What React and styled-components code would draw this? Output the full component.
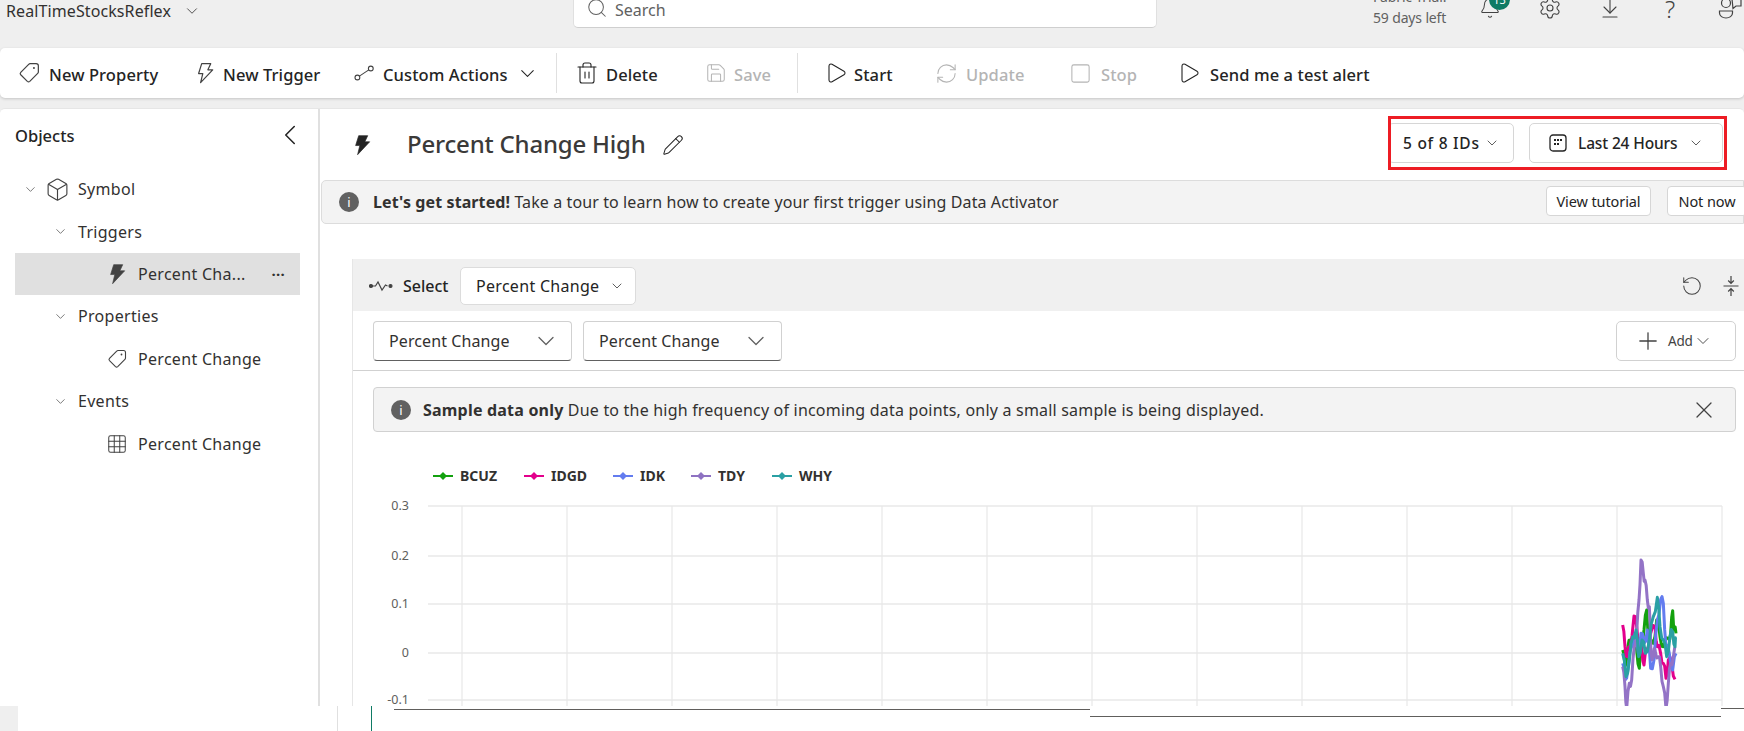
import React from 'react';
import styled, { createGlobalStyle } from 'styled-components';
import {
  Search, Settings, ArrowDownToLine, Bell, ChevronDown, ChevronLeft, Trash2, Save, Play, RefreshCw, Square, Pencil, Plus, X, RotateCcw, Box, Grid3x3,
} from 'lucide-react';

const GlobalStyle = createGlobalStyle`
  html, body { margin: 0; padding: 0; background: #fff; }
  body { font-family: "Noto Sans", "Open Sans", Arial, sans-serif; color: #242424; }
  * { box-sizing: border-box; }
`;

const Page = styled.div`
  width: 1744px;
  height: 731px;
  overflow: hidden;
  background: #efefef;
  display: flex;
  flex-direction: column;
`;

const TopBar = styled.header`
  height: 48px;
  flex: none;
  display: flex;
  align-items: flex-end;
  padding-bottom: 20px;
  overflow: hidden;
`;

const AppName = styled.div`
  width: 573px;
  flex: none;
  padding-left: 6px;
  margin-bottom: 7px;
  display: flex;
  align-items: center;
  gap: 12px;
  font-size: 16px;
  line-height: 20px;
  letter-spacing: 0.1px;
  color: #323130;
`;

const SearchBox = styled.div`
  width: 584px;
  height: 40px;
  flex: none;
  display: flex;
  align-items: center;
  gap: 7px;
  padding-left: 12px;
  background: #fff;
  border: 1px solid #e0e0e0;
  border-bottom-color: #cfcfcf;
  border-radius: 5px;
  font-size: 16px;
  color: #616161;
`;

const SearchText = styled.span`
  padding-top: 4px;
`;

const Trial = styled.div`
  width: 72px;
  flex: none;
  margin: 0 15px 0 216px;
  font-size: 14px;
  line-height: 21px;
  letter-spacing: -0.15px;
  white-space: nowrap;
  color: #616161;
`;

const HeadSlot = styled.div`
  position: relative;
  width: 60px;
  height: 40px;
  flex: none;
  display: flex;
  align-items: center;
  justify-content: center;
  color: #424242;
`;

const Badge = styled.span`
  position: absolute;
  top: 1px;
  left: 29px;
  width: 21px;
  height: 21px;
  border-radius: 50%;
  background: #0f7b65;
  color: #fff;
  font-size: 11px;
  line-height: 21px;
  text-align: center;
`;

const QuestionMark = styled.span`
  font-size: 24px;
  font-weight: 300;
  color: #424242;
`;

const Toolbar = styled.nav`
  height: 50px;
  flex: none;
  display: flex;
  align-items: center;
  padding-left: 18px;
  background: #fff;
  border-radius: 5px;
  box-shadow: 0 1px 3px rgba(0, 0, 0, 0.18);
  margin-bottom: 10px;
`;

const ToolItem = styled.div`
  width: ${p => p.$w}px;
  flex: none;
  display: flex;
  align-items: center;
  gap: ${p => p.$gap || 9}px;
  font-size: 16.5px;
  font-weight: 500;
  letter-spacing: 0.1px;
  white-space: nowrap;
  color: ${p => (p.$off ? '#b4b4b4' : '#242424')};
`;

const ToolLabel = styled.span`
  padding-top: 2px;
`;

const ToolDivider = styled.span`
  width: 1px;
  height: 40px;
  flex: none;
  margin-right: ${p => p.$after}px;
  background: #e0e0e0;
`;

const Workspace = styled.div`
  height: 598px;
  flex: none;
  display: flex;
  background: #fff;
  border-top: 1px solid #e6e6e6;
  border-radius: 5px 5px 0 0;
`;

const Sidebar = styled.aside`
  width: 320px;
  flex: none;
  border-right: 2px solid #e0e0e0;
  padding-top: 13px;
`;

const SideHead = styled.div`
  height: 26px;
  margin-bottom: 20px;
  padding: 0 11px 0 15px;
  display: flex;
  align-items: center;
  justify-content: space-between;
  font-size: 16.5px;
  font-weight: 500;
`;

const TreeRow = styled.div`
  height: 42.4px;
  display: flex;
  align-items: center;
  padding-left: ${p => p.$indent}px;
  margin: 0 18px 0 15px;
  background: ${p => (p.$active ? '#e0e0e0' : 'transparent')};
  font-size: 16px;
  letter-spacing: 0.3px;
  white-space: nowrap;
  color: #323130;
`;

const TreeIcon = styled.span`
  width: ${p => p.$w}px;
  flex: none;
  display: flex;
  align-items: center;
  color: #424242;
`;

const Ellipsis = styled.span`
  margin-left: auto;
  margin-right: 15px;
  font-weight: 700;
  font-size: 15px;
`;

const Content = styled.main`
  position: relative;
  flex: 1;
  min-width: 0;
`;

const TitleRow = styled.div`
  height: 71px;
  display: flex;
  align-items: center;
  padding-left: 31px;
`;

const Title = styled.h1`
  margin: 0 16px 2px 34px;
  font-size: 24px;
  font-weight: 500;
  line-height: 30px;
  letter-spacing: -0.2px;
  color: #3b3a39;
`;

const FilterGroup = styled.div`
  margin: 0 21px 3px auto;
  display: flex;
  gap: 15px;
`;

const FilterButton = styled.button`
  width: ${p => p.$w}px;
  height: 40px;
  display: flex;
  align-items: center;
  gap: ${p => p.$gap}px;
  padding: 0 0 0 ${p => p.$pad}px;
  background: #fff;
  border: 1px solid #d6d6d6;
  border-radius: 5px;
  font: 500 15.5px "Noto Sans", sans-serif;
  letter-spacing: ${p => p.$track}px;
  white-space: nowrap;
  color: #242424;
`;

const RedFrame = styled.div`
  position: absolute;
  top: 7px;
  right: 17px;
  width: 339px;
  height: 54px;
  border: 3px solid #ed1c24;
  pointer-events: none;
`;

const Banner = styled.div`
  height: 44px;
  margin-left: 1px;
  display: flex;
  align-items: center;
  padding-left: 17px;
  gap: 14px;
  background: #f3f3f3;
  border: 1px solid #dcdcdc;
  border-radius: 5px 0 0 5px;
  font-size: 16px;
  letter-spacing: 0.1px;
  white-space: nowrap;
  color: #323130;
`;

const InfoDot = styled.span`
  width: 20px;
  height: 20px;
  flex: none;
  border-radius: 50%;
  background: #616161;
  color: #fff;
  font-size: 13px;
  line-height: 20px;
  letter-spacing: 0;
  text-align: center;
`;

const BannerActions = styled.div`
  margin: 0 -4px 2px auto;
  display: flex;
  gap: 16px;
`;

const SmallButton = styled.button`
  width: ${p => p.$w}px;
  height: 30px;
  padding: 0;
  background: #fff;
  border: 1px solid #d6d6d6;
  border-radius: 4px;
  font: 14.5px "Noto Sans", sans-serif;
  letter-spacing: -0.1px;
  color: #242424;
`;

const Card = styled.section`
  margin: 35px 0 0 32px;
  border-left: 1px solid #e6e6e6;
`;

const CardHead = styled.div`
  height: 52px;
  display: flex;
  align-items: center;
  padding: 2px 0 0 16px;
  background: #f0f0f0;
  font-size: 16px;
  font-weight: 500;
`;

const SelectLabel = styled.span`
  width: 57px;
  margin-left: 10px;
`;

const MeasureButton = styled.div`
  width: 176px;
  height: 38px;
  display: flex;
  align-items: center;
  justify-content: space-between;
  padding: 0 10px 0 15px;
  background: #fff;
  border: 1px solid #dcdcdc;
  border-radius: 5px;
  font-weight: 400;
  letter-spacing: 0.3px;
  white-space: nowrap;
`;

const HeadTools = styled.div`
  margin-left: auto;
  margin-right: 5px;
  display: flex;
  align-items: center;
  gap: 20px;
  color: #424242;
`;

const FieldRow = styled.div`
  height: 60px;
  display: flex;
  align-items: center;
  gap: 11px;
  padding: 0 8px 0 20px;
  border-bottom: 1px solid #d1d1d1;
`;

const FieldSelect = styled.div`
  width: 199px;
  height: 40px;
  display: flex;
  align-items: center;
  justify-content: space-between;
  padding: 0 11px 0 15px;
  background: #fff;
  border: 1px solid #d1d1d1;
  border-bottom-color: #616161;
  border-radius: 4px;
  font-size: 16px;
  letter-spacing: 0.1px;
  white-space: nowrap;
  color: #323130;

  svg {
    color: #616161;
  }
`;

const AddButton = styled.div`
  width: 120px;
  height: 40px;
  margin-left: auto;
  display: flex;
  align-items: center;
  padding-left: 17px;
  background: #fff;
  border: 1px solid #d1d1d1;
  border-radius: 5px;
  font-size: 13.5px;
  color: #424242;
`;

const AddText = styled.span`
  margin: 0 0 0 6px;
  letter-spacing: -0.2px;
`;

const SampleNotice = styled.div`
  height: 45px;
  margin: 16px 8px 0 20px;
  display: flex;
  align-items: center;
  gap: 12px;
  padding: 0 17px 0 17px;
  background: #f3f3f3;
  border: 1px solid #d1d1d1;
  border-radius: 4px;
  font-size: 16px;
  letter-spacing: 0.2px;
  white-space: nowrap;
  color: #323130;
`;

const NoticeClose = styled.span`
  margin-left: auto;
  display: flex;
  color: #424242;
`;

const Legend = styled.div`
  height: 58px;
  padding: 29px 0 0 80px;
  display: flex;
  align-items: center;
`;

const LegendItem = styled.div`
  width: ${p => p.$w}px;
  flex: none;
  display: flex;
  align-items: center;
  gap: 7px;
  font-size: 14px;
  font-weight: 700;
  color: #323130;
`;

const ChartSvg = styled.svg`
  display: block;
  width: 1391px;
  height: 216px;
`;

const AxisText = styled.text`
  font: 12.5px "Noto Sans", sans-serif;
  fill: #605e5c;
`;

const BottomStrip = styled.div`
  flex: 1;
  display: flex;
  background: #fff;
`;

const Gutter = styled.div`
  width: 18px;
  flex: none;
  background: #efefef;
`;

const StripCell = styled.div`
  width: ${p => p.$w}px;
  flex: none;
  border-right: 1px solid ${p => p.$line || 'transparent'};
`;

const AxisPiece = styled.div`
  width: ${p => p.$w}px;
  height: 1px;
  flex: none;
  margin-top: ${p => p.$top}px;
  background: #605e5c;
`;

const thin = { strokeWidth: 1.1 };

const Flash = ({ size = 20, outline, color = '#424242' }) => (
  <svg width={size} height={size} viewBox="0 0 20 20">
    <path
      d="M7 1.5h8.2l-2.6 5.6H17L6 18.8l2-8.3H4.2z"
      fill={outline ? 'none' : color}
      stroke={color}
      strokeWidth={outline ? 1.1 : 0.6}
      strokeLinejoin="round"
    />
  </svg>
);

const TagIcon = ({ size = 22 }) => (
  <svg width={size} height={size} viewBox="0 0 20 20" fill="none" stroke="#424242" strokeWidth="1.1">
    <path d="M11 1.5h5.5A2 2 0 0 1 18.5 3.5V9c0 .5-.2 1-.6 1.4l-7.2 7.2a1.6 1.6 0 0 1-2.2 0l-6-6a1.6 1.6 0 0 1 0-2.2l7.2-7.3c.4-.4.8-.6 1.3-.6z" />
    <circle cx="14.5" cy="5.5" r="0.9" fill="#424242" stroke="none" />
  </svg>
);

const LinkIcon = () => (
  <svg width="21" height="20" viewBox="0 0 21 20" fill="none" stroke="#424242" strokeWidth="1.1">
    <circle cx="3.4" cy="14.5" r="2.4" />
    <circle cx="16.8" cy="5.5" r="2.4" />
    <path d="M5.4 13.1 14.8 6.9" />
  </svg>
);

const WaveIcon = () => (
  <svg width="24" height="14" viewBox="0 0 24 14" fill="none" stroke="#424242" strokeWidth="1.2">
    <circle cx="2" cy="7" r="1.5" fill="#424242" />
    <path d="M3 7h3.5L9 3l4 8 3.5-5 2 1" />
    <circle cx="21.5" cy="7" r="1.5" fill="#424242" />
  </svg>
);

const CollapseIcon = () => (
  <svg width="16" height="22" viewBox="0 0 16 22" fill="none" stroke="#424242" strokeWidth="1.2">
    <path d="M8 1v7M5.2 5.5 8 8.4l2.8-2.9M0.5 11h15M8 21v-7M5.2 16.5 8 13.6l2.8 2.9" />
  </svg>
);

const CalendarIcon = () => (
  <svg width="18" height="18" viewBox="0 0 18 18" fill="#242424">
    <rect x="1" y="1" width="16" height="16" rx="3" fill="none" stroke="#242424" strokeWidth="1.3" />
    <rect x="5" y="5" width="2" height="2" />
    <rect x="8" y="5" width="2" height="2" />
    <rect x="11" y="5" width="2" height="2" />
    <rect x="5" y="9" width="2" height="2" />
    <rect x="8" y="9" width="2" height="2" />
  </svg>
);

const PersonIcon = () => (
  <svg width="26" height="24" viewBox="0 0 26 24" fill="none" stroke="#424242" strokeWidth="1.2">
    <circle cx="9" cy="7" r="4.5" />
    <path d="M2.5 15h13v2c0 3-3 5-6.5 5s-6.5-2-6.5-5z" />
    <path d="M15 3h9v7h-5l-3 2.5z" />
  </svg>
);

const Marker = ({ color }) => (
  <svg width="20" height="10" viewBox="0 0 20 10">
    <path d="M0 5h20" stroke={color} strokeWidth="2" />
    <path d="M10 1l4 4-4 4-4-4z" fill={color} />
  </svg>
);

const legend = [
  { name: 'BCUZ', color: '#13a10e', w: 91 },
  { name: 'IDGD', color: '#e3008c', w: 89 },
  { name: 'IDK', color: '#637cef', w: 78 },
  { name: 'TDY', color: '#8e72c2', w: 81 },
  { name: 'WHY', color: '#2aa0a4', w: 80 },
];

const yTicks = [
  { label: '0.3', y: 506 },
  { label: '0.2', y: 556 },
  { label: '0.1', y: 604 },
  { label: '0', y: 653 },
  { label: '-0.1', y: 700 },
];

const xTicks = Array.from({ length: 13 }, (_, i) => 462 + i * 105);

// points read off the reference, in crop pixels (3x from x=1540, y=520)
const series = [
  { color: '#13a10e', pts: [[248,390],[255,440],[262,390],[272,360],[280,340],[290,390],[298,445],[305,360],[312,330],[320,270],[328,380],[340,370],[350,300],[360,350],[370,380],[385,355],[392,340],[398,272],[403,330],[408,340]] },
  { color: '#e3008c', pts: [[248,315],[255,380],[262,410],[270,380],[282,288],[290,320],[297,360],[305,380],[312,435],[320,390],[332,340],[345,320],[352,380],[362,400],[370,430],[378,475],[385,420],[395,430],[405,478]] },
  { color: '#637cef', pts: [[248,430],[255,480],[265,440],[275,380],[285,340],[295,400],[303,340],[312,370],[322,330],[332,445],[342,420],[352,300],[362,238],[370,250],[378,380],[388,400],[398,450],[408,400]] },
  { color: '#9373c6', pts: [[248,440],[255,500],[260,565],[268,490],[275,480],[283,380],[290,340],[297,240],[303,120],[310,160],[315,180],[322,240],[328,260],[333,400],[340,410],[345,390],[355,410],[362,440],[370,500],[378,565],[385,490],[392,430],[400,410],[408,385]] },
  { color: '#2aa0a4', pts: [[248,400],[258,470],[268,420],[278,350],[288,330],[296,410],[306,360],[316,400],[328,360],[340,290],[352,232],[360,320],[370,360],[380,410],[390,350],[398,335],[405,380],[408,355]] },
];

// add a midpoint with a little wobble so the lines look like sampled data
const roughen = pts =>
  pts.flatMap(([x, y], i) => {
    if (i === pts.length - 1) return [[x, y]];
    const [nx, ny] = pts[i + 1];
    return [[x, y], [(x + nx) / 2, (y + ny) / 2 + (i % 2 ? 14 : -14)]];
  });

const toPage = pts => pts.map(([x, y]) => `${1540 + x / 3},${520 + y / 3}`).join(' ');

const Chart = () => (
  <ChartSvg viewBox="353 490 1391 216">
    {yTicks.map(t => (
      <g key={t.label}>
        <path d={`M428 ${t.y}H1722`} stroke="#e8e8e8" strokeWidth="1.5" />
        <AxisText x="409" y={t.y + 4} textAnchor="end">{t.label}</AxisText>
      </g>
    ))}
    {xTicks.map(x => (
      <path key={x} d={`M${x} 506V706`} stroke="#e8e8e8" strokeWidth="1.2" />
    ))}
    {series.map(s => (
      <polyline key={s.color} points={toPage(roughen(s.pts))} fill="none" stroke={s.color} strokeWidth="3" strokeLinejoin="round" />
    ))}
  </ChartSvg>
);

const App = () => (
  <Page>
    <GlobalStyle />
    <TopBar>
      <AppName>
        RealTimeStocksReflex
        <ChevronDown size={18} {...thin} />
      </AppName>
      <SearchBox>
        <Search size={22} {...thin} />
        <SearchText>Search</SearchText>
      </SearchBox>
      <Trial>
        Fabric Trial:
        <br />
        59 days left
      </Trial>
      <HeadSlot>
        <Bell size={22} {...thin} />
        <Badge>13</Badge>
      </HeadSlot>
      <HeadSlot><Settings size={24} {...thin} /></HeadSlot>
      <HeadSlot><ArrowDownToLine size={24} {...thin} /></HeadSlot>
      <HeadSlot><QuestionMark>?</QuestionMark></HeadSlot>
      <HeadSlot><PersonIcon /></HeadSlot>
    </TopBar>

    <Toolbar>
      <ToolItem $w={176}><TagIcon /><ToolLabel>New Property</ToolLabel></ToolItem>
      <ToolItem $w={160} $gap={7}><Flash outline size={22} /><ToolLabel>New Trigger</ToolLabel></ToolItem>
      <ToolItem $w={202} $gap={8}><LinkIcon /><ToolLabel>Custom Actions</ToolLabel><ChevronDown size={23} {...thin} /></ToolItem>
      <ToolDivider $after={18} />
      <ToolItem $w={130} $gap={7}><Trash2 size={24} {...thin} /><ToolLabel>Delete</ToolLabel></ToolItem>
      <ToolItem $w={92} $gap={7} $off><Save size={22} {...thin} /><ToolLabel>Save</ToolLabel></ToolItem>
      <ToolDivider $after={26} />
      <ToolItem $w={111} $gap={6}><Play size={24} {...thin} /><ToolLabel>Start</ToolLabel></ToolItem>
      <ToolItem $w={134} $gap={8} $off><RefreshCw size={23} {...thin} /><ToolLabel>Update</ToolLabel></ToolItem>
      <ToolItem $w={108} $gap={9} $off><Square size={23} {...thin} /><ToolLabel>Stop</ToolLabel></ToolItem>
      <ToolItem $w={200} $gap={9}><Play size={24} {...thin} /><ToolLabel>Send me a test alert</ToolLabel></ToolItem>
    </Toolbar>

    <Workspace>
      <Sidebar>
        <SideHead>
          Objects
          <ChevronLeft size={34} {...thin} />
        </SideHead>
        <TreeRow $indent={8}>
          <TreeIcon $w={22}><ChevronDown size={15} {...thin} /></TreeIcon>
          <TreeIcon $w={33}><Box size={25} {...thin} /></TreeIcon>
          Symbol
        </TreeRow>
        <TreeRow $indent={38}>
          <TreeIcon $w={25}><ChevronDown size={15} {...thin} /></TreeIcon>
          Triggers
        </TreeRow>
        <TreeRow $indent={91} $active>
          <TreeIcon $w={32}><Flash size={22} /></TreeIcon>
          Percent Cha...
          <Ellipsis>···</Ellipsis>
        </TreeRow>
        <TreeRow $indent={38}>
          <TreeIcon $w={25}><ChevronDown size={15} {...thin} /></TreeIcon>
          Properties
        </TreeRow>
        <TreeRow $indent={92}>
          <TreeIcon $w={31}><TagIcon size={20} /></TreeIcon>
          Percent Change
        </TreeRow>
        <TreeRow $indent={38}>
          <TreeIcon $w={25}><ChevronDown size={15} {...thin} /></TreeIcon>
          Events
        </TreeRow>
        <TreeRow $indent={91}>
          <TreeIcon $w={32}><Grid3x3 size={22} {...thin} /></TreeIcon>
          Percent Change
        </TreeRow>
      </Sidebar>

      <Content>
        <TitleRow>
          <Flash size={22} color="#242424" />
          <Title>Percent Change High</Title>
          <Pencil size={22} {...thin} />
          <FilterGroup>
            <FilterButton $w={126} $pad={14} $gap={4} $track={0.75}>
              5 of 8 IDs
              <ChevronDown size={16} {...thin} />
            </FilterButton>
            <FilterButton $w={194} $pad={19} $gap={11} $track={-0.15}>
              <CalendarIcon />
              Last 24 Hours
              <ChevronDown size={16} {...thin} />
            </FilterButton>
          </FilterGroup>
        </TitleRow>
        <RedFrame />
        <Banner>
          <InfoDot>i</InfoDot>
          <span>
            <b>Let&apos;s get started!</b> Take a tour to learn how to create your first trigger using Data Activator
          </span>
          <BannerActions>
            <SmallButton $w={105}>View tutorial</SmallButton>
            <SmallButton $w={80}>Not now</SmallButton>
          </BannerActions>
        </Banner>

        <Card>
          <CardHead>
            <WaveIcon />
            <SelectLabel>Select</SelectLabel>
            <MeasureButton>
              Percent Change
              <ChevronDown size={16} {...thin} />
            </MeasureButton>
            <HeadTools>
              <RotateCcw size={22} {...thin} />
              <CollapseIcon />
            </HeadTools>
          </CardHead>
          <FieldRow>
            <FieldSelect>
              Percent Change
              <ChevronDown size={28} {...thin} />
            </FieldSelect>
            <FieldSelect>
              Percent Change
              <ChevronDown size={28} {...thin} />
            </FieldSelect>
            <AddButton>
              <Plus size={28} {...thin} />
              <AddText>Add</AddText>
              <ChevronDown size={20} {...thin} />
            </AddButton>
          </FieldRow>
          <SampleNotice>
            <InfoDot>i</InfoDot>
            <span>
              <b>Sample data only</b> Due to the high frequency of incoming data points, only a small sample is being displayed.
            </span>
            <NoticeClose><X size={28} {...thin} /></NoticeClose>
          </SampleNotice>
          <Legend>
            {legend.map(l => (
              <LegendItem key={l.name} $w={l.w}>
                <Marker color={l.color} />
                {l.name}
              </LegendItem>
            ))}
          </Legend>
          <Chart />
        </Card>
      </Content>
    </Workspace>

    <BottomStrip>
      <Gutter />
      <StripCell $w={320} $line="#e0e0e0" />
      <StripCell $w={34} $line="#0f7b65" />
      <StripCell $w={22} />
      <AxisPiece $w={696} $top={3} />
      <AxisPiece $w={631} $top={10} />
      <AxisPiece $w={23} $top={2} />
    </BottomStrip>
  </Page>
);

export default App;
